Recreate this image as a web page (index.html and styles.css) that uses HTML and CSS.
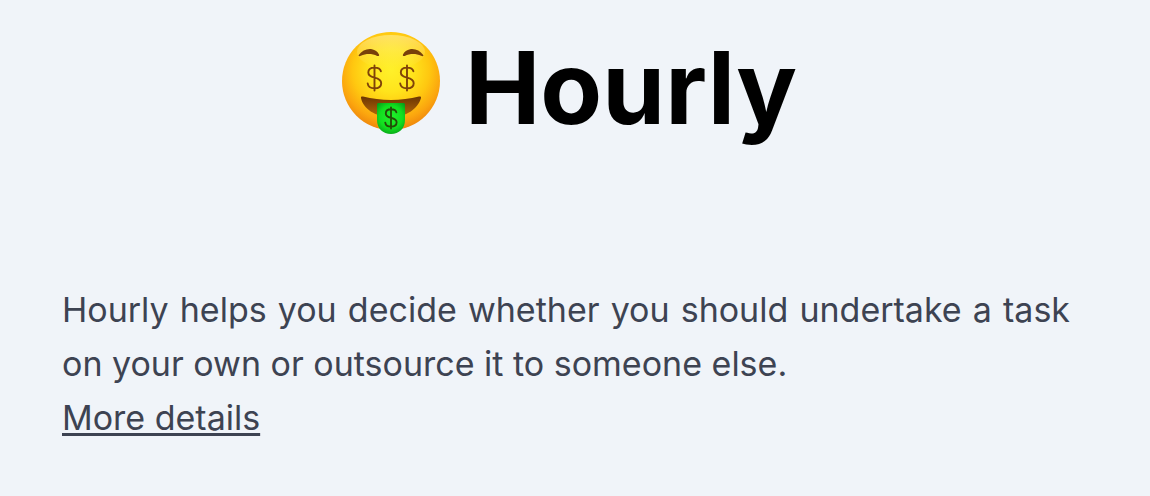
FILE: index.html
```html
<!DOCTYPE html>
<html lang="en">
<head>
<meta charset="utf-8">
<meta name="viewport" content="width=device-width, initial-scale=1">
<title>Hourly</title>
<link rel="stylesheet" href="styles.css">
</head>
<body>
<main class="page">
  <h1 class="title">
    <svg class="title-icon" viewBox="0 0 100 104" aria-hidden="true">
      <defs>
        <radialGradient id="face" cx="50" cy="39" r="62" gradientUnits="userSpaceOnUse">
          <stop offset="0" stop-color="#fff02a"/>
          <stop offset=".35" stop-color="#ffe41c"/>
          <stop offset=".62" stop-color="#ffc710"/>
          <stop offset=".82" stop-color="#fba50e"/>
          <stop offset="1" stop-color="#ec800c"/>
        </radialGradient>
        <linearGradient id="shine" x1="0" y1="0" x2="0" y2="1">
          <stop offset="0" stop-color="#fff6b8" stop-opacity=".5"/>
          <stop offset="1" stop-color="#fff38a" stop-opacity="0"/>
        </linearGradient>
        <linearGradient id="mouth" x1="0" y1="0" x2="0" y2="1">
          <stop offset="0" stop-color="#6b3503"/>
          <stop offset="1" stop-color="#b76a08"/>
        </linearGradient>
        <radialGradient id="tongue" cx="50" cy="86" r="19" gradientUnits="userSpaceOnUse">
          <stop offset="0" stop-color="#22f02d"/>
          <stop offset=".6" stop-color="#12df1f"/>
          <stop offset="1" stop-color="#059b18"/>
        </radialGradient>
        <path id="dollar" d="M6.4-6.7C5.8-9.4 3.3-10.4 0-10.4c-3.7 0-6.2 1.9-6.2 4.9C-6.2-2.2-3.2-1.1 0-.3c3.6.9 6.7 2 6.7 5.5 0 3.2-2.8 5.1-6.7 5.1-3.8 0-6.4-1.6-6.8-4.8M0-12.500v25"/>
      </defs>
      <circle cx="50" cy="50" r="49" fill="url(#face)"/>
      <ellipse cx="50" cy="21" rx="34" ry="17" fill="url(#shine)"/>
      <path d="M17.800 24C21 19.500 26 17.300 31 18.200c3 .6 5.700 2.500 7 5.200.6 1.400-.6 2.100-1.800 1.500-5.200-2.300-11-2.500-16.400-.1-1.600.7-2.700.2-2-.8Z" fill="#78400a"/>
      <path d="M82.200 24C79 19.500 74 17.300 69 18.200c-3 .6-5.700 2.500-7 5.200-.6 1.400.6 2.100 1.800 1.500 5.200-2.300 11-2.500 16.400-.1 1.600.7 2.700.2 2-.8Z" fill="#78400a"/>
      <g fill="none" stroke="#804309" stroke-width="1.900" stroke-linecap="round">
        <use href="#dollar" transform="translate(33.500 47)"/>
        <use href="#dollar" transform="translate(66 47)"/>
      </g>
      <path d="M20 67c-.2-1.500.8-1.800 2-1.500 18 4.500 38 4.500 56 0 1.200-.3 2.200 0 2 1.500C77 78 65 86 50 86S22 78 20 67Z" fill="url(#mouth)"/>
      <path d="M36 73.500c0-1 .7-1.500 1.800-1.500h24.400c1.100 0 1.800.5 1.800 1.500V89c0 8.500-6 14-14 14s-14-5.500-14-14Z" fill="url(#tongue)"/>
      <use href="#dollar" transform="translate(50 87) scale(.84)" fill="none" stroke="#234d08" stroke-width="2.200" stroke-linecap="round"/>
    </svg>
    <span>Hourly</span>
  </h1>
  <p class="intro">Hourly helps you decide whether you should undertake a task on your own or outsource it to someone else.</p>
  <a class="more" href="#details">More details</a>
</main>
</body>
</html>
```
FILE: styles.css
```css
body {
  margin: 0;
  background: #f0f4f9;
  color: #3d4352;
  font: 34px/54px Inter, "Liberation Sans", sans-serif;
}

.page {
  padding: 27px 80px 48px 62px;
}

.title {
  display: flex;
  align-items: flex-start;
  justify-content: center;
  gap: 24px;
  margin: 0 0 136px;
  padding-left: 6px;
  color: #000;
  font-size: 101px;
  font-weight: 700;
  line-height: 120px;
}

.title-icon {
  width: 100px;
  height: 104px;
  margin-top: 4px;
}

.intro {
  margin: 0;
  text-align: justify;
}

.more {
  color: inherit;
  text-decoration-thickness: 3px;
  text-underline-offset: 3px;
  text-decoration-skip-ink: none;
}
```
